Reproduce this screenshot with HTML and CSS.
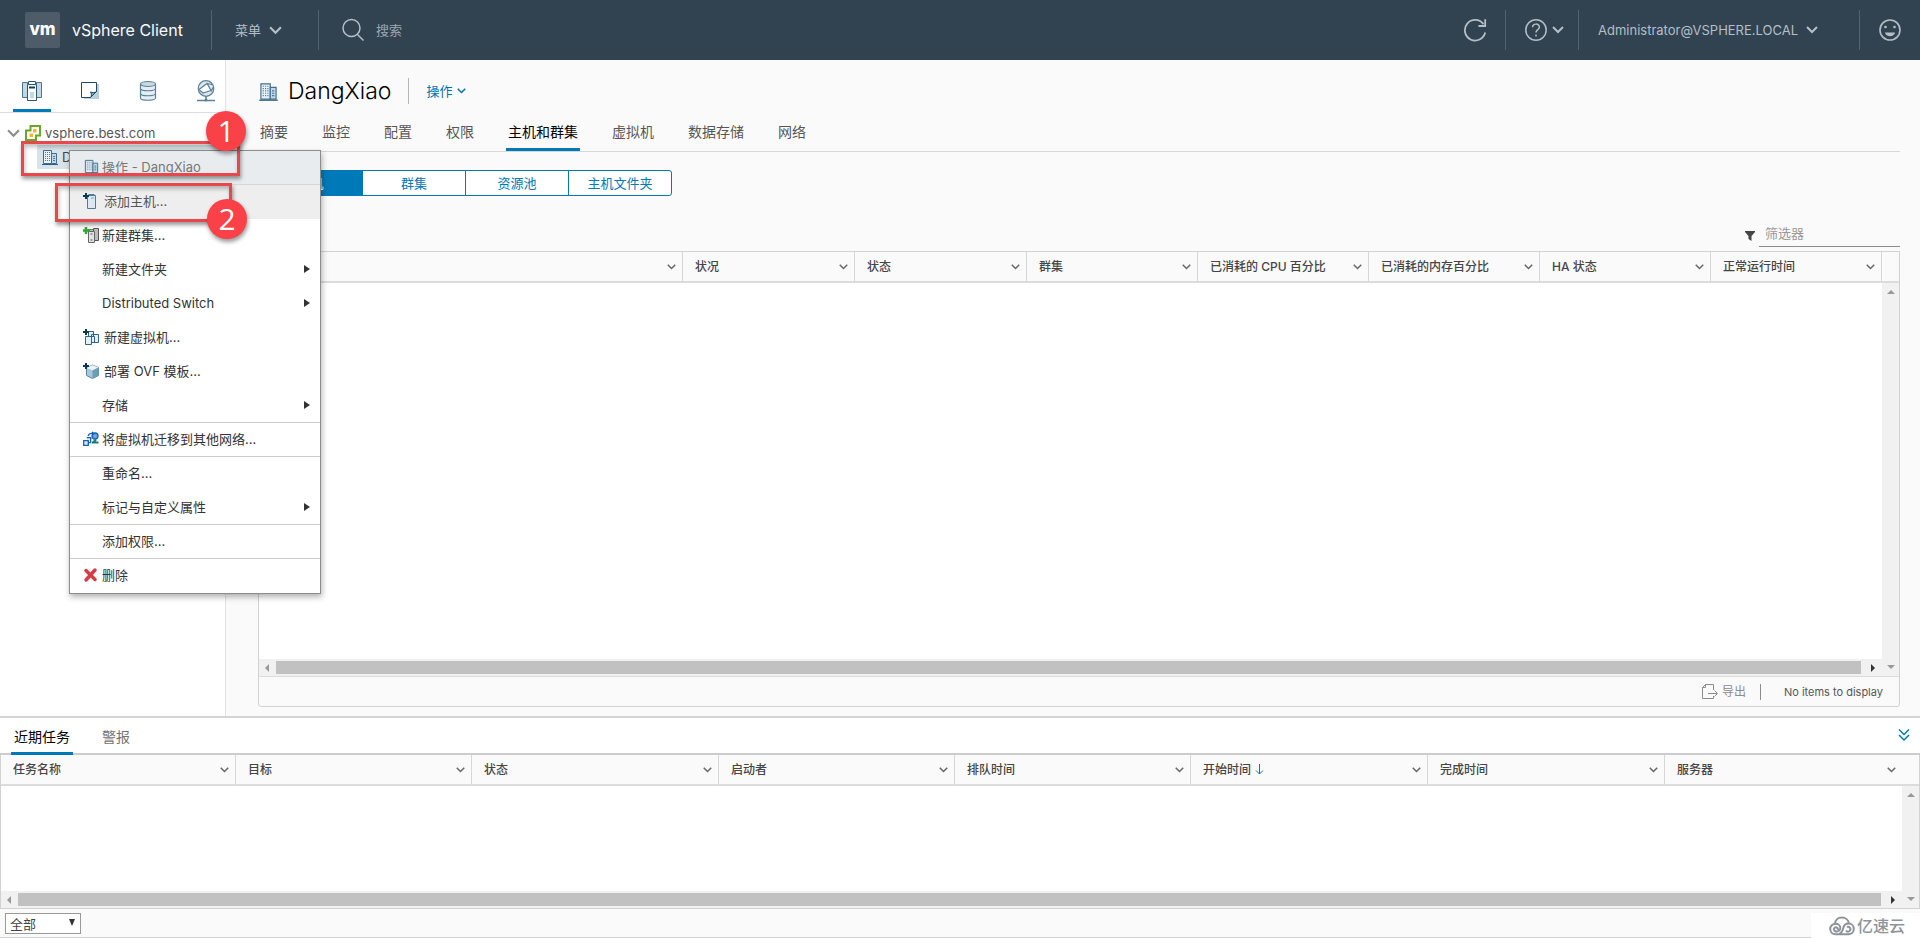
FILE: index.html
```html
<!DOCTYPE html>
<html lang="zh-CN">
<head>
<meta charset="utf-8">
<title>vSphere Client</title>
<link rel="stylesheet" href="styles.css">
</head>
<body>
<svg class="defs" aria-hidden="true">
  <symbol id="chev" viewBox="0 0 12 8"><path d="M1 1l5 5 5-5" fill="none" stroke="currentColor"/></symbol>
  <symbol id="dc" viewBox="0 0 18 18">
    <path d="M2.500 2.500h8v13h-8z" fill="#e9f2f7" stroke="#3f6f8c"/>
    <path d="M10.500 5.500h5v10h-5z" fill="#c3d8e4" stroke="#3f6f8c"/>
    <path d="M1 16.500h16" stroke="#2f5d79"/>
    <path d="M4.500 4v10M6.500 4v10M8.500 4v10" stroke="#4f7d98" stroke-dasharray="1 1"/>
    <path d="M12 8.500h2M12 10.500h2M12 12.500h2" stroke="#4f7d98"/>
  </symbol>
  <symbol id="plus" viewBox="0 0 16 16"><path d="M3 0v6M0 3h6" stroke="#10394f" stroke-width="2"/></symbol>
</svg>

<header class="topbar">
  <div class="logo">vm</div>
  <div class="product">vSphere Client</div>
  <button class="top-menu" type="button">菜单 <svg class="chev-lg"><use href="#chev"/></svg></button>
  <div class="search">
    <svg width="24" height="24" viewBox="0 0 24 24" fill="none" stroke="currentColor" stroke-width="1.500"><circle cx="9.500" cy="10" r="8.500"/><path d="M15.500 16.500l6 6"/></svg>
    <input type="text" placeholder="搜索" aria-label="搜索">
  </div>
  <button class="top-btn refresh" type="button" aria-label="刷新">
    <svg width="24" height="24" viewBox="0 0 24 24" fill="none" stroke="currentColor" stroke-width="1.800"><path d="M22.200 14.500A10.300 10.300 0 1 1 20.500 6.200M15.500 8H22.200V1.200"/></svg>
  </button>
  <button class="top-btn help" type="button" aria-label="帮助">
    <svg width="24" height="24" viewBox="0 0 24 24" fill="none" stroke="currentColor" stroke-width="1.500"><circle cx="12" cy="12" r="10.200"/><path d="M8.600 9.300c0-4.200 6.800-4.200 6.800-.2 0 2.600-3.400 2.600-3.400 5.400M12 16.500v2"/></svg>
    <svg class="chev-md"><use href="#chev"/></svg>
  </button>
  <button class="top-btn user" type="button">Administrator@VSPHERE.LOCAL <svg class="chev-md"><use href="#chev"/></svg></button>
  <button class="top-btn smile" type="button" aria-label="反馈">
    <svg width="24" height="24" viewBox="0 0 24 24"><circle cx="12" cy="12" r="10" fill="none" stroke="currentColor" stroke-width="1.600"/><circle cx="7.500" cy="9" r="1.300" fill="currentColor"/><circle cx="16.500" cy="9" r="1.300" fill="currentColor"/><path d="M7 14.500h10c-1 5-9 5-10 0z" fill="currentColor"/></svg>
  </button>
</header>

<main class="workspace">
  <aside class="sidebar">
    <nav class="views">
      <button class="view active" type="button" aria-label="主机和群集">
        <svg width="22" height="22" viewBox="0 0 22 22"><path d="M1.500 2.500h5v15h-5zM15.500 2.500h5v15h-5z" fill="#c4d8e4" stroke="#4a7690"/><path d="M6.500 4.500h9v16h-9z" fill="#fff" stroke="#2b5873"/><path d="M7.500 1.500h7v3h-7z" fill="#fff" stroke="#2b5873"/><path d="M9 12h4v6H9z" fill="#c4d8e4"/><path d="M8 7.500h6" stroke="#173f58" stroke-width="2"/></svg>
      </button>
      <button class="view" type="button" aria-label="虚拟机和模板">
        <svg width="22" height="22" viewBox="0 0 22 22"><path d="M5 4h15v15H5z" fill="#b8cfdc"/><path d="M2.500 2.500h15v9l-6 6h-9z" fill="#fff" stroke="#1f4a63"/><path d="M11.500 17.500c1.500-1.500 1-4 0-5.500 2 .8 4.500.8 6-.5z" fill="#7ba3b9" stroke="#1f4a63"/></svg>
      </button>
      <button class="view" type="button" aria-label="存储">
        <svg width="22" height="22" viewBox="0 0 22 22" fill="#e6eef3" stroke="#5c8299" stroke-width="1.200"><path d="M3.500 4v14c0 3 15 3 15 0V4"/><ellipse cx="11" cy="4" rx="7.500" ry="2.500" fill="#c9dae4"/><path d="M3.500 8.500c0 3 15 3 15 0M3.500 13.500c0 3 15 3 15 0" fill="none"/></svg>
      </button>
      <button class="view" type="button" aria-label="网络">
        <svg width="22" height="22" viewBox="0 0 22 22"><circle cx="11" cy="8.500" r="7.800" fill="#dce8ef" stroke="#5c8299" stroke-width="1.200"/><path d="M4 9.500l8-6 4 7-8 2.500zM12 3.500l5 1M16 11.500l2-4" fill="#fff" stroke="#5c8299" stroke-width="1.200"/><path d="M11 16v4M2 20.500h18" stroke="#5c8299" stroke-width="1.600"/><circle cx="11" cy="20" r="1.500" fill="#5c8299"/></svg>
      </button>
    </nav>
    <div class="tree">
      <div class="node root">
        <svg class="chev-lg"><use href="#chev"/></svg>
        <svg width="16" height="16" viewBox="0 0 16 16" fill="none"><path d="M5.500 1h9.500v9.500h-4V15H1V5.500h4.500z" stroke="#6aa823" stroke-width="2"/><path d="M8 4h3.500v3.500H8zM4.500 8.500H8V12H4.500z" fill="#f3b531"/></svg>
        <span>vsphere.best.com</span>
      </div>
      <div class="node child">
        <svg width="18" height="18"><use href="#dc"/></svg>
        <span>DangXiao</span>
      </div>
    </div>
  </aside>

  <section class="content">
    <div class="title-row">
      <svg width="21" height="21"><use href="#dc"/></svg>
      <h1>DangXiao</h1>
      <button class="actions" type="button">操作 <svg class="chev-sm"><use href="#chev"/></svg></button>
    </div>
    <nav class="tabs">
      <a href="#">摘要</a><a href="#">监控</a><a href="#">配置</a><a href="#">权限</a><a href="#" class="active">主机和群集</a><a href="#">虚拟机</a><a href="#">数据存储</a><a href="#">网络</a>
    </nav>
    <div class="segments">
      <button class="active" type="button">主机</button><button type="button">群集</button><button type="button">资源池</button><button type="button">主机文件夹</button>
    </div>
    <div class="filter">
      <svg width="10" height="10" viewBox="0 0 10 10"><path d="M0 0h10v1L6.500 5v5L3.500 8V5L0 1z" fill="#454545"/></svg>
      <input type="text" placeholder="筛选器" aria-label="筛选器">
    </div>
    <div class="grid hosts">
      <table>
        <colgroup><col><col class="w172"><col class="w172"><col class="w171"><col class="w171"><col class="w171"><col class="w171"><col class="w171"><col class="w17"></colgroup>
        <thead><tr>
          <th><div class="th"><span>名称</span><svg class="chev-sm"><use href="#chev"/></svg></div></th>
          <th><div class="th"><span>状况</span><svg class="chev-sm"><use href="#chev"/></svg></div></th>
          <th><div class="th"><span>状态</span><svg class="chev-sm"><use href="#chev"/></svg></div></th>
          <th><div class="th"><span>群集</span><svg class="chev-sm"><use href="#chev"/></svg></div></th>
          <th><div class="th"><span>已消耗的 CPU 百分比</span><svg class="chev-sm"><use href="#chev"/></svg></div></th>
          <th><div class="th"><span>已消耗的内存百分比</span><svg class="chev-sm"><use href="#chev"/></svg></div></th>
          <th><div class="th"><span>HA 状态</span><svg class="chev-sm"><use href="#chev"/></svg></div></th>
          <th><div class="th"><span>正常运行时间</span><svg class="chev-sm"><use href="#chev"/></svg></div></th>
          <td></td>
        </tr></thead>
      </table>
      <div class="viewport">
        <div class="rows"></div>
        <div class="vbar"><i class="up"></i><i class="down"></i></div>
        <div class="hbar"><i class="left"></i><b></b><i class="right"></i></div>
      </div>
      <div class="grid-foot">
        <button class="export" type="button"><svg width="17" height="17" viewBox="0 0 17 17" fill="none" stroke="currentColor"><path d="M12.500 7V1.500h-8l-3 3v11h11V13M4.500 1.500v3h-3M7 10.500h9M13.500 7.500l3 3-3 3"/></svg>导出</button>
        <span class="count">No items to display</span>
      </div>
    </div>
  </section>
</main>

<section class="dock">
  <nav class="dock-tabs">
    <button class="active" type="button">近期任务</button>
    <button type="button">警报</button>
    <button class="collapse" type="button" aria-label="折叠"><svg width="12" height="14" viewBox="0 0 12 14" fill="none" stroke="#0079b8" stroke-width="1.500"><path d="M1 1.500l5 5 5-5M1 7l5 5 5-5"/></svg></button>
  </nav>
  <div class="grid tasks">
    <table>
      <colgroup><col class="w235"><col class="w236"><col class="w247"><col class="w236"><col class="w236"><col class="w237"><col class="w237"><col><col class="w17"></colgroup>
      <thead><tr>
        <th><div class="th"><span>任务名称</span><svg class="chev-sm"><use href="#chev"/></svg></div></th>
        <th><div class="th"><span>目标</span><svg class="chev-sm"><use href="#chev"/></svg></div></th>
        <th><div class="th"><span>状态</span><svg class="chev-sm"><use href="#chev"/></svg></div></th>
        <th><div class="th"><span>启动者</span><svg class="chev-sm"><use href="#chev"/></svg></div></th>
        <th><div class="th"><span>排队时间</span><svg class="chev-sm"><use href="#chev"/></svg></div></th>
        <th><div class="th"><span>开始时间</span><svg class="sort" width="9" height="11" viewBox="0 0 9 11" fill="none" stroke="#0079b8"><path d="M4.500 0v10M1 6.500L4.500 10 8 6.500"/></svg><svg class="chev-sm"><use href="#chev"/></svg></div></th>
        <th><div class="th"><span>完成时间</span><svg class="chev-sm"><use href="#chev"/></svg></div></th>
        <th class="last"><div class="th"><span>服务器</span><svg class="chev-sm"><use href="#chev"/></svg></div></th>
        <td></td>
      </tr></thead>
    </table>
    <div class="viewport">
      <div class="rows"></div>
      <div class="vbar"><i class="up"></i><i class="down"></i></div>
      <div class="hbar"><i class="left"></i><b></b><i class="right"></i></div>
    </div>
  </div>
  <footer class="dock-foot">
    <div class="picker"><select aria-label="任务筛选"><option>全部</option></select><i class="caret"></i></div>
    <div class="watermark">
      <svg width="26" height="20" viewBox="0 0 26 20" fill="none" stroke="#8d929b" stroke-width="2"><path d="M6 8.300C6 4 9 1.500 12.800 1.500S19.500 4 19.800 7.300"/><path d="M8.800 14a2 2 0 1 0-2.400 1.300c2.700.8 4.900-1 4.900-3.300 0-2.500-2-4.200-4.700-4.200C3.700 7.800 1.200 10 1.200 13s2.300 5.300 5.400 5.300h12.600c3.300 0 5.600-2.300 5.600-5.300s-2.300-5.400-5.200-5.400-4.600 1.800-5.200 4.200c-.8 3.200-2 5.200-4 6.200"/><path d="M17 14.500a2.400 2.400 0 1 0 1-3.500"/></svg>
      <span>亿速云</span>
    </div>
  </footer>
</section>

<div class="menu" role="menu">
  <div class="item head"><svg width="17" height="17"><use href="#dc"/></svg>操作 - DangXiao</div>
  <button class="item add hover" type="button"><svg width="16" height="16" viewBox="0 0 16 16"><path d="M4.500 2.500h8v13h-8z" fill="#dbe8f0" stroke="#4c7c96"/><path d="M5.500 1.500h6" stroke="#4c7c96"/><path d="M8 5h3" stroke="#7ea3b8"/><use href="#plus" width="16" height="16"/></svg>添加主机...</button>
  <button class="item" type="button"><svg width="16" height="16" viewBox="0 0 16 16"><path d="M5.500 2.500h6v10h-6z" fill="#b9b9b9" stroke="#777"/><path d="M10.500 1.500h5v12h-5z" fill="#bcbcbc" stroke="#555"/><path d="M5.500 4.500h6v11h-6z" fill="#e3e3e3" stroke="#666"/><path d="M7.500 7h2M7.500 13h2" stroke="#555"/><path d="M3 0v7M0 3.500h7" stroke="#33a532" stroke-width="2.500"/></svg>新建群集...</button>
  <button class="item sub" type="button">新建文件夹</button>
  <button class="item sub" type="button">Distributed Switch</button>
  <button class="item add" type="button"><svg width="16" height="16" viewBox="0 0 16 16" fill="#e4eff5" stroke="#2f6584"><path d="M5.500 2.500h5v5h-5zM8.500 5.500h7v8h-7zM2.500 7.500h6v8h-6zM8.500 7.500h3v6h-3z"/><use href="#plus" width="16" height="16"/></svg>新建虚拟机...</button>
  <button class="item add" type="button"><svg width="16" height="16" viewBox="0 0 16 16"><path d="M3.500 5L9.500 2l6 2.500v8l-6 3-6-3z" fill="#a7c6d8" stroke="#5a8aa5"/><path d="M3.500 5l6 2.500 6-3L9.500 2z" fill="#e8f1f6"/><path d="M9.500 7.500v8l6-3v-8z" fill="#6d9cb6"/><use href="#plus" width="16" height="16"/></svg>部署 OVF 模板...</button>
  <button class="item sub line" type="button">存储</button>
  <button class="item line" type="button"><svg width="16" height="16" viewBox="0 0 16 16" fill="#dcebfa" stroke="#1761b0" stroke-width="1.300"><path d="M.7 9.700h4.600v4.600H.7zM3.700 6.700h4v5h-3"/><circle cx="12" cy="5" r="3" fill="#6ba4df"/><path d="M5 5c1-2.500 3-3 5-2.500M9 1l2 1.500-2 2" fill="none"/><path d="M9 11.500h6.500M13 8.500l-3 3" fill="none" stroke="#177b74" stroke-width="2"/></svg>将虚拟机迁移到其他网络...</button>
  <button class="item sub-none" type="button">重命名...</button>
  <button class="item sub line" type="button">标记与自定义属性</button>
  <button class="item sub-none line" type="button">添加权限...</button>
  <button class="item" type="button"><svg width="16" height="16" viewBox="0 0 16 16"><path d="M3 3.500l9 9M12 3l-9 10" stroke="#d63c43" stroke-width="3.500" stroke-linecap="round"/></svg>删除</button>
</div>

<div class="mark-box box-one"></div>
<div class="mark-box box-two"></div>
<div class="mark-dot dot-one">1</div>
<div class="mark-dot dot-two">2</div>
</body>
</html>
```
FILE: styles.css
```css
* { box-sizing: border-box; }
body {
  margin: 0;
  min-height: 100vh;
  display: flex;
  flex-direction: column;
  position: relative;
  background: #fafafa;
  color: #454545;
  font: 13px/20px Inter, "Noto Sans CJK SC", sans-serif;
}
button, input, select { font: inherit; color: inherit; }
button { border: 0; background: none; padding: 0; margin: 0; }
input { border: 0; background: none; outline: 0; min-width: 0; padding: 0; }
a { color: inherit; text-decoration: none; }
svg { flex: none; display: block; }
.defs { display: none; }
.chev-lg { width: 13px; height: 9px; stroke-width: 2; }
.chev-md { width: 12px; height: 8px; stroke-width: 2; }
.chev-sm { width: 9px; height: 6px; stroke-width: 2; }

.topbar {
  height: 60px;
  display: flex;
  align-items: center;
  background: #314351;
  color: #b4bfc7;
  padding-left: 25px;
}
.logo {
  width: 35px;
  height: 36px;
  border-radius: 2px;
  background: #4e5c69;
  color: #fff;
  font-size: 17px;
  line-height: 34px;
  font-weight: 800;
  text-align: center;
}
.product { width: 139px; margin-left: 12px; padding-bottom: 1px; color: #fafafa; font-size: 16px; }
.top-menu { display: flex; align-items: center; gap: 8px; width: 107px; padding-left: 23px; }
.top-menu, .search, .help, .user, .smile { height: 40px; border-left: 1px solid #516270; }
.search { flex: 1; display: flex; align-items: center; gap: 10px; padding-left: 23px; }
.search input { flex: 1; }
.search input::placeholder { color: #9aa7b1; opacity: 1; }
.top-btn { display: flex; align-items: center; }
.refresh { width: 42px; }
.help { width: 73px; padding-left: 18px; gap: 4px; }
.user { width: 281px; padding-left: 19px; gap: 8px; }
.smile { width: 61px; padding-left: 18px; }

.workspace { flex: 1; display: flex; border-bottom: 2px solid #d4d4d4; }
.sidebar { width: 226px; background: #fff; border-right: 1px solid #e2e2e2; }
.views { height: 53px; display: flex; justify-content: space-between; padding: 0 0 0 13px; border-bottom: 1px solid #ddd; }
.view { width: 38px; display: flex; align-items: center; justify-content: center; padding-top: 12px; border-bottom: 3px solid transparent; }
.view.active { border-color: #0079b8; }
.tree { padding-top: 8px; }
.node { display: flex; align-items: center; height: 24px; }
.root { gap: 4px; padding-left: 7px; color: #565656; }
.root .chev-lg { color: #8c8c8c; margin-right: 1px; }
.child { margin-left: 37px; padding-left: 4px; gap: 3px; background: #d9e4ea; }

.content { flex: 1; min-width: 0; display: flex; flex-direction: column; padding: 14px 20px 9px 32px; }
.title-row { display: flex; align-items: center; height: 34px; }
.title-row h1 { margin: 0 17px 0 9px; font-size: 23px; line-height: 32px; font-weight: 300; color: #000; }
.actions { height: 26px; border-left: 1px solid #b5b5b5; padding-left: 17px; display: flex; align-items: center; gap: 5px; color: #0072b0; }
.tabs { display: flex; gap: 30px; height: 44px; border-bottom: 1px solid #d7d7d7; font-size: 14px; color: #565656; }
.tabs a { padding: 14px 2px 0; border-bottom: 3px solid transparent; }
.tabs .active { color: #000; border-color: #0079b8; }
.segments { display: flex; align-self: flex-start; margin: 18px 0 29px; border: 1px solid #0079b8; border-radius: 3px; background: #fff; overflow: hidden; }
.segments button { width: 103px; height: 24px; color: #0079b8; border-left: 1px solid #0079b8; }
.segments button.active { background: #0079b8; color: #fff; border-left: 0; }
.filter { display: flex; align-items: center; align-self: flex-end; gap: 4px; height: 22px; }
.filter input { width: 141px; height: 22px; padding: 0 6px 6px; border-bottom: 1px solid #8c8c8c; }
.filter input::placeholder { color: #999; opacity: 1; }

.grid { display: flex; flex-direction: column; }
.grid table { width: 100%; table-layout: fixed; border-collapse: separate; border-spacing: 0; background: #fafafa; }
.grid th, .grid td { height: 31px; padding: 0; border-bottom: 2px solid #dcdcdc; }
.grid th { border-right: 1px solid #d7d7d7; text-align: left; font-size: 12px; font-weight: 500; }
.grid th.last { border-right: 0; }
.th { display: flex; align-items: center; padding: 0 6px 0 12px; }
.th .chev-sm { margin-left: auto; color: #666; }
.th .sort { margin-left: 4px; }
.w17 { width: 17px; }
.w171 { width: 171px; }
.w172 { width: 172px; }
.w235 { width: 235px; }
.w236 { width: 236px; }
.w237 { width: 237px; }
.w247 { width: 247px; }
.hosts { flex: 1; margin-top: 4px; border: 1px solid #d2d2d2; border-radius: 0 0 3px 3px; }
.viewport { flex: 1; display: grid; grid-template: 1fr 17px / 1fr 17px; background: #fff; }
.vbar { grid-row: 1 / 3; grid-column: 2; display: flex; flex-direction: column; align-items: center; justify-content: space-between; padding: 7px 0; background: #f1f1f1; }
.hbar { grid-row: 2; grid-column: 1; display: flex; align-items: center; background: #f1f1f1; padding: 0 7px 0 6px; gap: 7px; }
.hbar b { flex: 1; height: 13px; background: #c1c1c1; margin-right: 3px; }
.up, .down { border: 4px solid transparent; border-top: 0; border-bottom-color: #999; }
.down { border-top: 4px solid #999; border-bottom: 0; }
.left, .right { border: 4px solid transparent; border-left: 0; border-right-color: #999; }
.right { border-left: 4px solid #333; border-right: 0; }
.grid-foot { height: 30px; display: flex; align-items: center; justify-content: flex-end; border-top: 1px solid #dcdcdc; font-size: 12px; padding-right: 16px; color: #565656; }
.export { display: flex; align-items: center; gap: 4px; color: #8c8c8c; }
.count { margin-left: 14px; padding-left: 23px; border-left: 1px solid #8c8c8c; line-height: 16px; font-size: 11px; }

.dock { background: #fff; }
.dock-tabs { height: 37px; display: flex; gap: 26px; padding: 0 7px 0 11px; border-bottom: 2px solid #ccc; }
.dock-tabs button { font-size: 14px; padding: 4px 3px 0; margin-bottom: -2px; border-bottom: 3px solid transparent; color: #737373; }
.dock-tabs button.active { color: #000; border-color: #0079b8; }
.dock-tabs .collapse { margin-left: auto; padding-top: 0; }
.tasks { border: 1px solid #d2d2d2; border-width: 0 1px 1px; }
.tasks .viewport { min-height: 122px; }
.dock-foot { height: 29px; display: flex; align-items: flex-end; justify-content: space-between; background: #fafafa; border-bottom: 1px solid #d2d2d2; padding-left: 5px; }
.picker { position: relative; width: 76px; height: 21px; margin-bottom: 3px; }
.picker select { width: 100%; height: 100%; appearance: none; border: 1px solid #999; background: #fff; padding: 0 4px; line-height: 18px; }
.caret { position: absolute; right: 6px; top: 6px; border: 3px solid transparent; border-top: 7px solid #333; border-bottom: 0; }
.watermark { height: 25px; width: 109px; display: flex; align-items: center; padding-left: 18px; gap: 2px; background: #fff; color: #8d929b; font-size: 16px; font-weight: 500; margin-bottom: -1px; }

.menu { position: absolute; left: 69px; top: 150px; width: 252px; border: 1px solid #8c8c8c; background: #fff; box-shadow: 1px 3px 6px rgba(0, 0, 0, .3); }
.item { width: 100%; height: 34px; display: flex; align-items: center; gap: 3px; padding: 0 10px 2px 13px; color: #333; text-align: left; }
.add { gap: 5px; }
.head { background: #e8ecef; color: #777; border-bottom: 1px solid #d7d7d7; gap: 2px; }
.hover { background: #eee; color: #565656; }
.line { border-bottom: 1px solid #ccc; }
.sub, .sub-none { padding-left: 32px; }
.sub::after { content: ""; margin-left: auto; border: 4px solid transparent; border-left: 6px solid #333; border-right: 0; }

.mark-box { position: absolute; border: 3px solid #e8484c; box-shadow: 1px 3px 4px rgba(0, 0, 0, .4), inset 1px 3px 4px rgba(0, 0, 0, .25); }
.box-one { left: 21px; top: 141px; width: 219px; height: 35px; }
.box-two { left: 55px; top: 183px; width: 177px; height: 39px; }
.mark-dot { position: absolute; width: 40px; height: 40px; border-radius: 50%; background: #fb4148; color: #fff; font: 400 30px/40px "Open Sans", sans-serif; text-align: center; box-shadow: 1px 3px 4px rgba(0, 0, 0, .4); }
.dot-one { left: 206px; top: 111px; }
.dot-two { left: 207px; top: 199px; }
```
